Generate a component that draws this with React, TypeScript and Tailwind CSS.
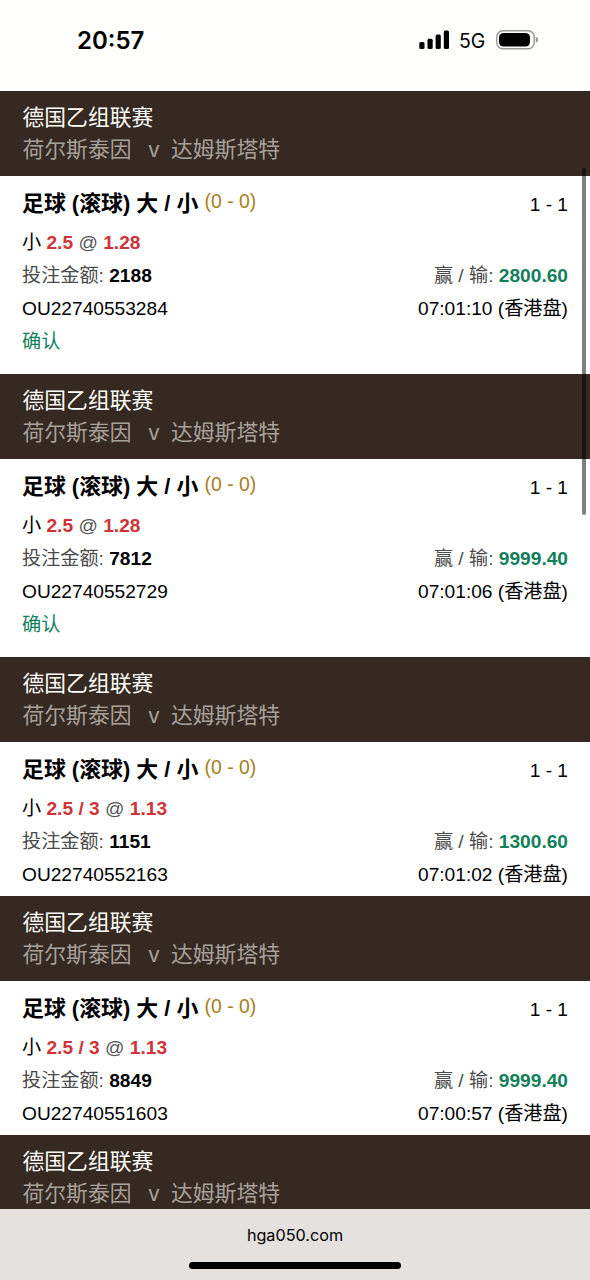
import clsx from "clsx";

type Bet = {
  line: string;
  odds: string;
  stake: string;
  result: string;
  id: string;
  time: string;
  confirmed?: boolean;
};

const bets: Bet[] = [
  { line: "2.5", odds: "1.28", stake: "2188", result: "2800.60", id: "OU22740553284", time: "07:01:10", confirmed: true },
  { line: "2.5", odds: "1.28", stake: "7812", result: "9999.40", id: "OU22740552729", time: "07:01:06", confirmed: true },
  { line: "2.5 / 3", odds: "1.13", stake: "1151", result: "1300.60", id: "OU22740552163", time: "07:01:02" },
  { line: "2.5 / 3", odds: "1.13", stake: "8849", result: "9999.40", id: "OU22740551603", time: "07:00:57" },
];

function StatusBar() {
  return (
    <header className="flex h-[91px] shrink-0 items-start justify-between bg-[#fefefc] pr-[51px] pl-[77px] font-['Inter',sans-serif] text-black">
      <span className="mt-[23px] text-[24px] leading-9 font-semibold">20:57</span>
      <div className="mt-[25px] flex h-[30px] items-center">
        <svg className="mr-[-1px]" width="31" height="20" viewBox="0 0 31 20">
          <rect x="0.3" y="12" width="5.2" height="7" rx="1.5" />
          <rect x="8.5" y="8.8" width="5.2" height="10.2" rx="1.5" />
          <rect x="16.6" y="4.6" width="5.2" height="14.4" rx="1.5" />
          <rect x="24.8" y="0.4" width="5.2" height="18.6" rx="1.5" />
        </svg>
        <span className="mt-[2px] ml-[10px] w-[27px] text-[19.5px] leading-[30px] whitespace-nowrap">5G</span>
        <svg className="ml-[10px]" width="43" height="20" viewBox="0 0 43 20">
          <rect x="0.8" y="0.8" width="37.4" height="18" rx="6" fill="none" stroke="#999" strokeWidth="1.4" />
          <rect x="3" y="3" width="31" height="13.6" rx="4.5" />
          <path d="M39.8 6.800c3.200.8 3.200 5.200 0 6z" fill="#999" />
        </svg>
      </div>
    </header>
  );
}

function MatchHeader() {
  return (
    <div className="h-[85px] shrink-0 bg-[#352921] px-[22.5px] pt-[11px] text-[21.8px] leading-8">
      <div className="text-[#fffdf9]">德国乙组联赛</div>
      <div className="flex text-[#a8a09b]">
        <span>荷尔斯泰因</span>
        <span className="ml-[17px] w-[22.5px]">v</span>
        <span>达姆斯塔特</span>
      </div>
    </div>
  );
}

function BetCard({ bet }: { bet: Bet }) {
  return (
    <section className="shrink-0">
      <MatchHeader />
      <div
        className={clsx(
          "bg-white px-[22px] text-[19.15px] leading-[33px] text-black",
          bet.confirmed ? "h-[198px]" : "h-[154px]",
        )}
      >
        <div className="flex h-[50px] items-start pt-[10px]">
          <h2 className="mt-px w-[182.5px] text-[21.9px] font-bold whitespace-nowrap">足球 (滚球) 大 / 小</h2>
          <span className="mt-[-1px] text-[19.4px] text-[#a87f1e]">(0 - 0)</span>
          <span className="mt-[2px] ml-auto">1 - 1</span>
        </div>
        <div>
          小 <b className="text-[#cf3338]">{bet.line}</b> <span className="text-[#555]">@</span>{" "}
          <b className="text-[#cf3338]">{bet.odds}</b>
        </div>
        <div className="flex justify-between">
          <span>
            <span className="text-[#4a4a4a]">投注金额:</span> <b>{bet.stake}</b>
          </span>
          <span>
            <span className="text-[#4a4a4a]">赢 / 输:</span> <b className="text-[#12805a]">{bet.result}</b>
          </span>
        </div>
        <div className="flex justify-between">
          <span>{bet.id}</span>
          <span>{bet.time} (香港盘)</span>
        </div>
        {bet.confirmed && <div className="text-[#12805a]">确认</div>}
      </div>
    </section>
  );
}

export default function App() {
  return (
    <div className="relative flex h-[1280px] w-[590px] flex-col overflow-hidden bg-white font-['Liberation_Sans','Noto_Sans_CJK_SC',sans-serif]">
      <StatusBar />
      <main className="flex min-h-0 flex-1 flex-col overflow-hidden">
        {bets.map((bet) => (
          <BetCard key={bet.id} bet={bet} />
        ))}
        <MatchHeader />
      </main>
      <footer className="flex h-[71px] shrink-0 flex-col items-center bg-[#e4e1df] text-black">
        <span className="mt-[14px] font-['Inter',sans-serif] text-[16.2px] leading-6">hga050.com</span>
        <div className="mt-[15px] h-[7px] w-[212px] rounded-full bg-black" />
      </footer>
      <div className="absolute top-[168px] right-[4px] h-[347px] w-[4px] rounded-full bg-black/50" />
    </div>
  );
}
